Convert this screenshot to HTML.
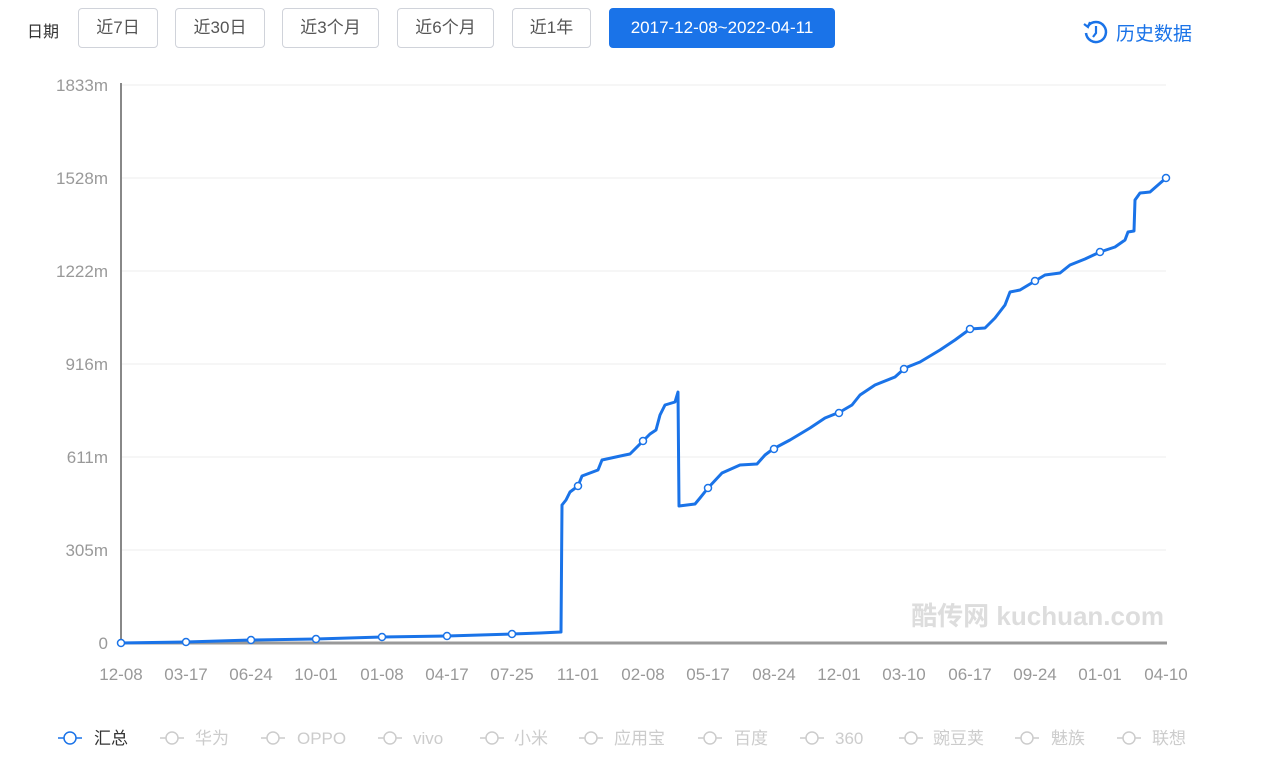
<!DOCTYPE html>
<html><head><meta charset="utf-8"><style>
body{margin:0;width:1275px;height:761px;background:#fff;font-family:"Liberation Sans","Noto Sans CJK SC",sans-serif;overflow:hidden;position:relative}
.lbl{position:absolute;left:27px;top:18px;font-size:16px;color:#333}
.btn{position:absolute;top:8px;height:40px;border:1px solid #d0d3da;border-radius:4px;box-sizing:border-box;font-size:17px;color:#555;line-height:38px;text-align:center}
.act{background:#1a73e8;border-color:#1a73e8;color:#fff}
.hist{position:absolute;left:1082px;top:18px;font-size:19px;color:#1a73e8;display:flex;align-items:center;gap:6px}
</style></head><body>
<div class="lbl">日期</div>
<div class="btn" style="left:78px;width:80px">近7日</div>
<div class="btn" style="left:175px;width:90px">近30日</div>
<div class="btn" style="left:282px;width:97px">近3个月</div>
<div class="btn" style="left:397px;width:97px">近6个月</div>
<div class="btn" style="left:512px;width:79px">近1年</div>
<div class="btn act" style="left:609px;width:226px">2017-12-08~2022-04-11</div>
<div class="hist"><svg width="28" height="28" viewBox="0 0 28 28"><path d="M6 8 A10 10 0 1 1 4 15" fill="none" stroke="#1a73e8" stroke-width="2.5"/><path d="M2 6 L6 9 L8 4" fill="none" stroke="#1a73e8" stroke-width="2.2"/><path d="M14 8 L14 15 L11 19" fill="none" stroke="#1a73e8" stroke-width="2.2"/></svg>历史数据</div>
<svg width="1275" height="761" style="position:absolute;left:0;top:0" font-family="Liberation Sans, Noto Sans CJK SC, sans-serif">
<g stroke="#eee" stroke-width="1">
<line x1="121" y1="85" x2="1166" y2="85"/><line x1="121" y1="178" x2="1166" y2="178"/><line x1="121" y1="271" x2="1166" y2="271"/><line x1="121" y1="364" x2="1166" y2="364"/><line x1="121" y1="457" x2="1166" y2="457"/><line x1="121" y1="550" x2="1166" y2="550"/>
</g>
<line x1="121" y1="83" x2="121" y2="645" stroke="#888" stroke-width="2"/>
<g fill="#999" font-size="17" text-anchor="end">
<text x="108" y="91">1833m</text><text x="108" y="184">1528m</text><text x="108" y="277">1222m</text><text x="108" y="370">916m</text><text x="108" y="463">611m</text><text x="108" y="556">305m</text><text x="108" y="649">0</text>
</g>
<text x="1164" y="625" text-anchor="end" font-size="26" font-weight="bold" fill="#ddd">酷传网 kuchuan.com</text>
<line x1="121" y1="643" x2="1167" y2="643" stroke="#999" stroke-width="3"/>
<g fill="#999" font-size="17" text-anchor="middle">
<text x="121" y="680">12-08</text><text x="186" y="680">03-17</text><text x="251" y="680">06-24</text><text x="316" y="680">10-01</text><text x="382" y="680">01-08</text><text x="447" y="680">04-17</text><text x="512" y="680">07-25</text><text x="578" y="680">11-01</text><text x="643" y="680">02-08</text><text x="708" y="680">05-17</text><text x="774" y="680">08-24</text><text x="839" y="680">12-01</text><text x="904" y="680">03-10</text><text x="970" y="680">06-17</text><text x="1035" y="680">09-24</text><text x="1100" y="680">01-01</text><text x="1166" y="680">04-10</text>
</g>
<polyline fill="none" stroke="#1a73e8" stroke-width="3" stroke-linejoin="round" points="121,643 186,642 251,640 316,639 382,637 447,636 512,634 540,633 561,632 562,505 566,500 570,492 578,486 582,476 598,470 602,460 625,455 630,454 643,441 650,434 656,430 660,415 665,405 675,402 678,392 679,506 695,504 700,498 708,488 722,473 740,465 757,464 765,455 773,449 790,440 810,428 825,418 840,412 852,405 860,395 875,385 895,377 905,368 920,362 940,350 955,340 970,329 985,328 995,318 1005,305 1010,292 1020,290 1035,281 1045,275 1060,273 1070,265 1085,259 1100,252 1115,247 1125,240 1128,232 1134,231 1135,200 1140,193 1150,192 1158,185 1166,178"/>
<g fill="#fff" stroke="#1a73e8" stroke-width="1.5">
<circle cx="121" cy="643" r="3.5"/><circle cx="186" cy="642" r="3.5"/><circle cx="251" cy="640" r="3.5"/><circle cx="316" cy="639" r="3.5"/><circle cx="382" cy="637" r="3.5"/><circle cx="447" cy="636" r="3.5"/><circle cx="512" cy="634" r="3.5"/><circle cx="578" cy="486" r="3.5"/><circle cx="643" cy="441" r="3.5"/><circle cx="708" cy="488" r="3.5"/><circle cx="774" cy="449" r="3.5"/><circle cx="839" cy="413" r="3.5"/><circle cx="904" cy="369" r="3.5"/><circle cx="970" cy="329" r="3.5"/><circle cx="1035" cy="281" r="3.5"/><circle cx="1100" cy="252" r="3.5"/><circle cx="1166" cy="178" r="3.5"/>
</g>
<g font-size="17">
<g stroke="#1a73e8" stroke-width="1.5" fill="#fff"><line x1="58" y1="738" x2="82" y2="738"/><circle cx="70" cy="738" r="6"/></g><text x="94" y="744" fill="#333">汇总</text>
<g stroke="#ccc" stroke-width="1.5" fill="#fff">
<line x1="160" y1="738" x2="184" y2="738"/><circle cx="172" cy="738" r="6"/>
<line x1="261" y1="738" x2="285" y2="738"/><circle cx="273" cy="738" r="6"/>
<line x1="378" y1="738" x2="402" y2="738"/><circle cx="390" cy="738" r="6"/>
<line x1="480" y1="738" x2="504" y2="738"/><circle cx="492" cy="738" r="6"/>
<line x1="579" y1="738" x2="603" y2="738"/><circle cx="591" cy="738" r="6"/>
<line x1="698" y1="738" x2="722" y2="738"/><circle cx="710" cy="738" r="6"/>
<line x1="800" y1="738" x2="824" y2="738"/><circle cx="812" cy="738" r="6"/>
<line x1="899" y1="738" x2="923" y2="738"/><circle cx="911" cy="738" r="6"/>
<line x1="1015" y1="738" x2="1039" y2="738"/><circle cx="1027" cy="738" r="6"/>
<line x1="1117" y1="738" x2="1141" y2="738"/><circle cx="1129" cy="738" r="6"/>
</g>
<g fill="#ccc">
<text x="195" y="744">华为</text><text x="297" y="744">OPPO</text><text x="413" y="744">vivo</text><text x="514" y="744">小米</text><text x="614" y="744">应用宝</text><text x="734" y="744">百度</text><text x="835" y="744">360</text><text x="933" y="744">豌豆荚</text><text x="1051" y="744">魅族</text><text x="1152" y="744">联想</text>
</g>
</g>
</svg>
</body></html>
